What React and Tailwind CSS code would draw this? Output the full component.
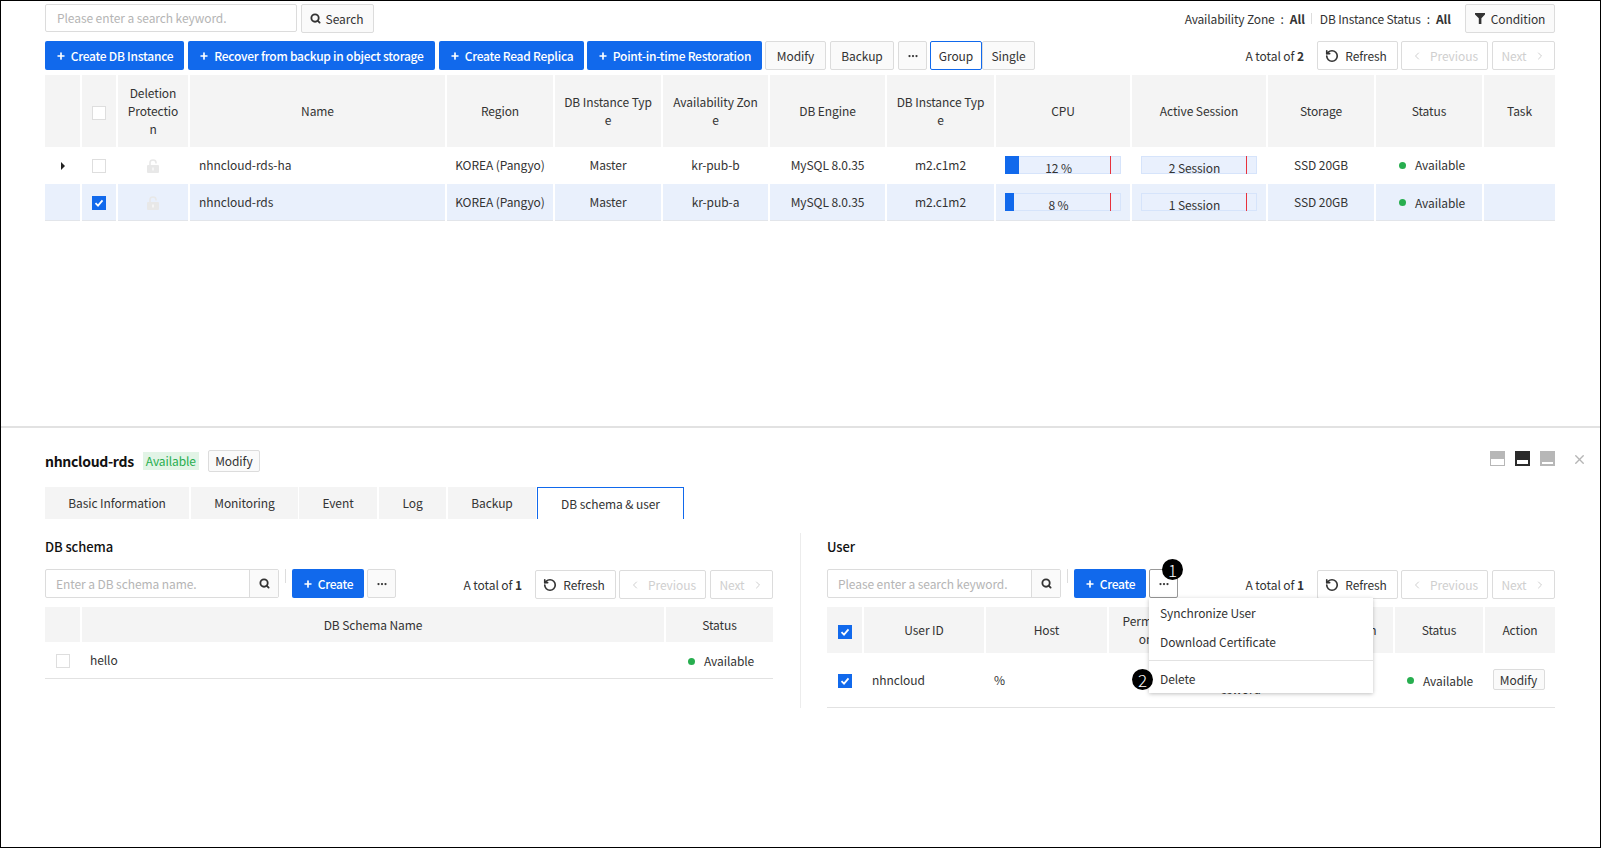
import React from 'react';
import { Plus, RotateCcw, Search, ChevronLeft, ChevronRight, X, Ellipsis } from 'lucide-react';

const Btn = ({ children, className = '' }) => (
  <button className={`h-[29px] flex items-center justify-center gap-[5px] border border-[#dcdcdc] bg-[#fafafa] rounded-[2px] text-[#333] shrink-0 whitespace-nowrap ${className}`}>
    {children}
  </button>
);

const BlueBtn = ({ children, className = '' }) => (
  <button className={`h-[29px] flex items-center justify-center gap-[5px] bg-[#1169ec] rounded-[2px] text-white font-medium tracking-[-0.25px] shrink-0 whitespace-nowrap ${className}`}>
    <Plus size={10} strokeWidth={4} />
    {children}
  </button>
);

const Check = ({ checked }) =>
  checked ? (
    <span className="w-[14px] h-[14px] bg-[#1169ec] inline-flex items-center justify-center align-middle">
      <svg width="10" height="10" viewBox="0 0 10 10">
        <path d="M1.5 5.2 L4 7.6 L8.5 2.4" fill="none" stroke="white" strokeWidth="1.8" />
      </svg>
    </span>
  ) : (
    <span className="w-[14px] h-[14px] bg-white border border-[#dedede] inline-block align-middle" />
  );

const LockIcon = () => (
  <svg width="12" height="14" viewBox="0 0 12 14" className="inline-block align-middle">
    <path d="M3 7V3.6C3 2 4.3 1 6 1s3 1 3 2.6V4.5" fill="none" stroke="#e8e8e8" strokeWidth="1.6" />
    <rect x="0" y="6" width="12" height="8" rx="1" fill="#e8e8e8" />
    <rect x="5.2" y="8.5" width="1.6" height="3" fill="#f8f8f8" />
  </svg>
);

const Funnel = () => (
  <svg width="10" height="11" viewBox="0 0 10 11">
    <path d="M0 0H10V1.6L6.4 5.2V11H3.8V5.2L0 1.6Z" fill="#333" />
  </svg>
);

const Dots = () => <Ellipsis size={12} strokeWidth={2.5} className="text-[#333]" />;

const Status = () => (
  <span className="inline-flex items-center gap-[9px]">
    <span className="w-[7px] h-[7px] rounded-full bg-[#27ae4f]" />
    Available
  </span>
);

const Meter = ({ percent, label }) => (
  <div className="relative w-[116px] h-[18px] mx-auto bg-[#e9f0fd] border border-[#d6e4fb]">
    {percent ? <div className="absolute left-[-1px] top-[-1px] bottom-[-1px] bg-[#1169ec]" style={{ width: `${percent}%` }} /> : null}
    <div className="absolute left-[104px] top-[-1px] bottom-[-1px] w-px bg-[#e8313c]" />
    <div className="relative w-[105px] text-center text-[12px] leading-[16px] pt-[3px] text-[#333]">{label}</div>
  </div>
);

const Paging = ({ total }) => (
  <div className="ml-auto flex items-center">
    <span className="mr-[13px] text-[#333]">
      A total of <b className="font-bold">{total}</b>
    </span>
    <Btn className="w-[81px] mr-[3px] pr-[3px] !bg-white">
      <RotateCcw size={14} strokeWidth={2.8} />
      <span className="ml-[1px]">Refresh</span>
    </Btn>
    <Btn className="w-[87px] mr-[4px] !bg-white !text-[#cfcfcf] gap-[7px]">
      <ChevronLeft size={12} />
      Previous
    </Btn>
    <Btn className="w-[63px] !bg-white !text-[#cfcfcf] gap-[7px]">
      Next
      <ChevronRight size={12} />
    </Btn>
  </div>
);

const SearchBox = ({ placeholder }) => (
  <div className="flex h-[29px] w-[234px] border border-[#dcdcdc] rounded-[2px] bg-white shrink-0">
    <span className="flex-1 px-[10px] leading-[27px] text-[#b5b5b5] whitespace-nowrap overflow-hidden">{placeholder}</span>
    <span className="w-[29px] border-l border-[#dcdcdc] bg-[#fafafa] flex items-center justify-center">
      <Search size={11} strokeWidth={4} className="text-[#333]" />
    </span>
  </div>
);

const Pipe = () => <span className="w-px h-[14px] bg-[#ddd] mx-[6px] shrink-0" />;

const Th = ({ children, className = 'px-[9px]' }) => (
  <th className={`border-r-2 border-white last:border-r-0 bg-[#f4f4f4] font-normal text-center align-middle leading-[18px] text-[#333] break-all ${className}`}>
    {children}
  </th>
);

const instanceCols = [36, 36, 72, 257, 108, 108, 107, 117, 109, 136, 136, 108, 108, 72];
const instanceHead = ['', '', 'Deletion Protection', 'Name', 'Region', 'DB Instance Type', 'Availability Zone', 'DB Engine', 'DB Instance Type', 'CPU', 'Active Session', 'Storage', 'Status', 'Task'];
const instances = [
  { name: 'nhncloud-rds-ha', zone: 'kr-pub-b', cpu: 12, cpuLabel: '12 %', session: '2 Session', expand: true },
  { name: 'nhncloud-rds', zone: 'kr-pub-a', cpu: 8, cpuLabel: '8 %', session: '1 Session', selected: true },
];

const InstanceTable = () => (
  <table className="w-[1510px] table-fixed border-collapse mt-[5px]">
    <colgroup>
      {instanceCols.map((w, i) => (
        <col key={i} style={{ width: w }} />
      ))}
    </colgroup>
    <thead>
      <tr className="h-[72px]">
        {instanceHead.map((h, i) => (
          <Th key={i}>{i === 1 ? <Check /> : h}</Th>
        ))}
      </tr>
    </thead>
    <tbody>
      {instances.map((row) => {
        const td = row.selected
          ? 'border-r-2 border-white last:border-r-0 text-center'
          : 'border-r-2 border-white last:border-r-0 text-center pb-[2px]';
        return (
          <tr key={row.name} className={row.selected ? 'h-[36px] bg-[#e9f0fc] border-b border-[#e2e5ea]' : 'h-[37px]'}>
            <td className={td}>
              {row.expand && <span className="inline-block w-0 h-0 border-y-[4px] border-y-transparent border-l-[4px] border-l-[#222]" />}
            </td>
            <td className={td}><Check checked={row.selected} /></td>
            <td className={td}><LockIcon /></td>
            <td className={`${td} !text-left pl-[9px]`}>{row.name}</td>
            <td className={td}>KOREA (Pangyo)</td>
            <td className={td}>Master</td>
            <td className={td}>{row.zone}</td>
            <td className={td}>MySQL 8.0.35</td>
            <td className={td}>m2.c1m2</td>
            <td className={td}><Meter percent={row.cpu} label={row.cpuLabel} /></td>
            <td className={td}><Meter label={row.session} /></td>
            <td className={td}>SSD 20GB</td>
            <td className={`${td} !text-left pl-[23px]`}><Status /></td>
            <td className={td} />
          </tr>
        );
      })}
    </tbody>
  </table>
);

const SchemaPanel = () => (
  <div className="w-[728px] shrink-0">
    <h3 className="mt-[4px] h-[20px] leading-[20px] text-[13px] font-medium text-[#111]">DB schema</h3>
    <div className="mt-[12px] flex items-start h-[30px]">
      <SearchBox placeholder="Enter a DB schema name." />
      <Pipe />
      <BlueBtn className="w-[72px]">Create</BlueBtn>
      <Btn className="w-[29px] ml-[3px]"><Dots /></Btn>
      <div className="ml-auto mt-px flex"><Paging total="1" /></div>
    </div>
    <table className="w-full table-fixed border-collapse mt-[8px]">
      <colgroup>
        <col style={{ width: 36 }} />
        <col />
        <col style={{ width: 108 }} />
      </colgroup>
      <thead>
        <tr className="h-[35px]">
          <Th />
          <Th>DB Schema Name</Th>
          <Th>Status</Th>
        </tr>
      </thead>
      <tbody>
        <tr className="h-[36px] border-b border-[#e2e2e2]">
          <td className="text-center"><Check /></td>
          <td className="pl-[9px] pt-px">hello</td>
          <td className="pl-[23px] pt-px"><Status /></td>
        </tr>
      </tbody>
    </table>
  </div>
);

const UserPanel = () => (
  <div className="w-[728px] shrink-0">
    <h3 className="mt-[4px] h-[20px] leading-[20px] text-[13px] font-medium text-[#111]">User</h3>
    <div className="mt-[12px] flex items-start h-[30px]">
      <SearchBox placeholder="Please enter a search keyword." />
      <Pipe />
      <BlueBtn className="w-[72px]">Create</BlueBtn>
      <div className="relative ml-[3px] z-10">
        <Btn className="w-[29px] !border-[#999] !bg-white"><Dots /></Btn>
        <span className="absolute left-[13px] top-[-10px] w-[21px] h-[21px] rounded-full bg-black text-white flex items-center justify-center text-[17px] leading-none font-light">1</span>
        <div className="absolute left-0 top-[29px] w-[224px] h-[95px] bg-white shadow-[0_1px_4px_rgba(0,0,0,0.25)]">
          <div className="h-[29px] leading-[29px] pl-[11px] whitespace-nowrap">Synchronize User</div>
          <div className="h-[29px] leading-[29px] pl-[11px] whitespace-nowrap">Download Certificate</div>
          <div className="mt-[4px] border-t border-[#e2e2e2] pt-[5px] h-[33px] leading-[25px] pl-[11px]">Delete</div>
          <span className="absolute left-[-17px] top-[71px] w-[21px] h-[21px] rounded-full bg-black text-white flex items-center justify-center text-[17px] leading-none font-light">2</span>
        </div>
      </div>
      <div className="ml-auto mt-px flex"><Paging total="1" /></div>
    </div>
    <table className="w-full table-fixed border-collapse mt-[8px]">
      <colgroup>
        {[36, 122, 123, 76, 114, 96, 90, 71].map((w, i) => (
          <col key={i} style={{ width: w }} />
        ))}
      </colgroup>
      <thead>
        <tr className="h-[46px]">
          <Th><Check checked /></Th>
          <Th>User ID</Th>
          <Th>Host</Th>
          <Th className="px-[12px]">Permission</Th>
          <Th>Authentication Plugin</Th>
          <Th>TLS Option</Th>
          <Th>Status</Th>
          <Th>Action</Th>
        </tr>
      </thead>
      <tbody>
        <tr className="h-[54px] border-b border-[#e2e2e2]">
          <td className="text-center"><Check checked /></td>
          <td className="pl-[9px]">nhncloud</td>
          <td className="pl-[9px]">%</td>
          <td />
          <td className="px-[7px] text-center leading-[18px] [overflow-wrap:anywhere]">caching_sha2_password</td>
          <td />
          <td className="pl-[13px]"><Status /></td>
          <td className="pr-[2px]">
            <button className="mx-auto flex items-center justify-center w-[52px] h-[21px] border border-[#dcdcdc] bg-[#fafafa] rounded-[2px]">Modify</button>
          </td>
        </tr>
      </tbody>
    </table>
  </div>
);

const PaneIcons = () => (
  <div className="ml-auto flex items-start mt-[-5px] mr-[-3px]">
    <span className="w-[15px] h-[15px] bg-[#b7b7b7] flex items-end p-px"><span className="w-full h-[6px] bg-white" /></span>
    <span className="ml-[10px] w-[15px] h-[15px] bg-[#2b2b2b] flex items-end px-[2px] pb-[2px]"><span className="w-full h-[4px] bg-white" /></span>
    <span className="ml-[10px] w-[15px] h-[15px] bg-[#b7b7b7] flex items-end px-[2px] pb-[2px]"><span className="w-full h-[2px] bg-white" /></span>
    <X size={15} strokeWidth={2.2} className="ml-[17px] mt-[1px] text-[#b5b5b5]" />
  </div>
);

const tabs = [
  ['Basic Information', 'w-[144px] mr-[2px]'],
  ['Monitoring', 'w-[107px] mr-px'],
  ['Event', 'w-[78px] mr-[2px]'],
  ['Log', 'w-[67px] mr-[2px]'],
  ['Backup', 'w-[88px] mr-px'],
];

export default function App() {
  return (
    <div className="w-[1601px] h-[848px] border border-black bg-white overflow-hidden text-[12px] tracking-[-0.08px] text-[#333] font-['Noto_Sans_CJK_KR','Noto_Sans',sans-serif]">
      <section className="h-[425px] pl-[44px] pr-[45px] pt-[3px]">
        <div className="flex items-start h-[29px]">
          <div className="w-[252px] h-[28px] border border-[#dcdcdc] rounded-[2px] px-[11px] leading-[26px] text-[#b5b5b5]">Please enter a search keyword.</div>
          <Btn className="w-[73px] ml-[4px] gap-[4px] pr-[2px]">
            <Search size={11} strokeWidth={4} />
            Search
          </Btn>
          <div className="ml-auto flex items-center h-[29px]">
            <span className="tracking-[-0.15px]">Availability Zone</span>
            <span className="mx-[6px]">:</span>
            <b className="font-bold">All</b>
            <span className="w-px h-[11px] bg-[#ddd] ml-[6px] mr-[8px]" />
            <span className="tracking-[-0.15px]">DB Instance Status</span>
            <span className="mx-[6px]">:</span>
            <b className="font-bold">All</b>
            <Btn className="w-[90px] ml-[14px] gap-[6px]"><Funnel />Condition</Btn>
          </div>
        </div>
        <div className="mt-[8px] flex items-center">
          <BlueBtn className="w-[139px]">Create DB Instance</BlueBtn>
          <BlueBtn className="w-[247px] ml-[4px]">Recover from backup in object storage</BlueBtn>
          <BlueBtn className="w-[145px] ml-[4px]">Create Read Replica</BlueBtn>
          <BlueBtn className="w-[175px] ml-[3px]">Point-in-time Restoration</BlueBtn>
          <Btn className="w-[61px] ml-[3px]">Modify</Btn>
          <Btn className="w-[64px] ml-[4px]">Backup</Btn>
          <Btn className="w-[29px] ml-[4px]"><Dots /></Btn>
          <Btn className="w-[52px] ml-[3px] !border-[#1169ec] !bg-white">Group</Btn>
          <Btn className="w-[53px]">Single</Btn>
          <Paging total="2" />
        </div>
        <InstanceTable />
      </section>

      <section className="border-t-2 border-[#e2e2e2] pl-[44px] pr-[16px] pt-[22px]">
        <div className="flex items-center h-[22px]">
          <h2 className="text-[14px] font-bold tracking-[-0.3px] text-[#111]">nhncloud-rds</h2>
          <span className="ml-[9px] w-[56px] h-[18px] bg-[#e2f4e6] text-[#27ae4f] text-center leading-[18px]">Available</span>
          <button className="ml-[9px] w-[52px] h-[22px] border border-[#dcdcdc] bg-[#fafafa] rounded-[2px]">Modify</button>
          <PaneIcons />
        </div>
        <div className="mt-[15px] flex h-[32px]">
          {tabs.map(([label, width]) => (
            <div key={label} className={`${width} bg-[#f4f4f4] flex items-center justify-center`}>{label}</div>
          ))}
          <div className="w-[147px] border-x border-t border-[#1169ec] bg-white flex items-center justify-center">DB schema &amp; user</div>
        </div>
        <div className="mt-[14px] flex items-start">
          <SchemaPanel />
          <div className="ml-[27px] mr-[26px] w-px h-[175px] bg-[#ececec] shrink-0" />
          <UserPanel />
        </div>
      </section>
    </div>
  );
}
